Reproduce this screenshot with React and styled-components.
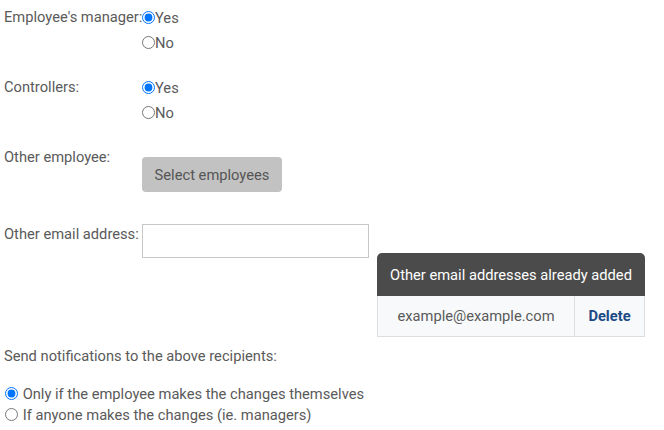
import React from 'react'
import styled, { createGlobalStyle } from 'styled-components'

const GlobalStyle = createGlobalStyle`
  body {
    margin: 0;
    background: #fff;
    font-family: Roboto, "Liberation Sans", sans-serif;
    font-size: 14.7px;
    color: #5a5a5a;
  }
`;

export default function App() {
  return (
    <Page>
      <GlobalStyle />
      <Row>
        <Label>Employee's manager:</Label>
        <Options>
          <Option><Radio name="mgr" defaultChecked />Yes</Option>
          <Option><Radio name="mgr" />No</Option>
        </Options>
      </Row>

      <Row $top={20}>
        <Label>Controllers:</Label>
        <Options>
          <Option><Radio name="ctl" defaultChecked />Yes</Option>
          <Option><Radio name="ctl" />No</Option>
        </Options>
      </Row>

      <Row $top={20}>
        <Label>Other employee:</Label>
        <SelectButton type="button">Select employees</SelectButton>
      </Row>

      <Row $top={30}>
        <Label>Other email address:</Label>
        <EmailInput type="text" />
        <AddedTable>
          <thead>
            <tr>
              <HeadCell colSpan={2}>Other email addresses already added</HeadCell>
            </tr>
          </thead>
          <tbody>
            <tr>
              <Cell $w={197}>example@example.com</Cell>
              <Cell $w={71}><DeleteLink>Delete</DeleteLink></Cell>
            </tr>
          </tbody>
        </AddedTable>
      </Row>

      <Notice>Send notifications to the above recipients:</Notice>
      <Choices>
        <Choice><Radio name="when" defaultChecked $gap /> Only if the employee makes the changes themselves</Choice>
        <Choice><Radio name="when" $gap /> If anyone makes the changes (ie. managers)</Choice>
      </Choices>
    </Page>
  )
}

const Radio = (props) => <RadioInput type="radio" {...props} />;

const Page = styled.div`
  padding: 5px 4px 0;
  width: 664px;
  height: 430px;
  box-sizing: border-box;
  overflow: hidden;
`;

const Row = styled.div`
  display: flex;
  align-items: flex-start;
  margin-top: ${p => p.$top || 0}px;
`;

const Label = styled.div`
  width: 138px;
  flex: none;
  white-space: nowrap;
  line-height: 25px;
`;

const Options = styled.div`
  display: flex;
  flex-direction: column;
`;

const Option = styled.label`
  display: flex;
  align-items: center;
  height: 25px;
`;

const RadioInput = styled.input`
  margin: 0 ${p => (p.$gap ? 1 : 0)}px 0 ${p => (p.$gap ? 1 : 0)}px;
  width: 13px;
  height: 13px;
`;

const SelectButton = styled.button`
  margin-top: 12px;
  width: 140px;
  height: 35px;
  border: none;
  border-radius: 4px;
  background: #c2c2c2;
  color: #555;
  font-family: Roboto, "Liberation Sans", sans-serif;
  font-size: 14.7px;
  padding: 0;
`;

const EmailInput = styled.input`
  margin-top: 2px;
  width: 227px;
  height: 34px;
  box-sizing: border-box;
  border: 1px solid #c8c8c8;
  padding: 0 6px;
  font-family: Roboto, "Liberation Sans", sans-serif;
  font-size: 14.7px;
`;

const AddedTable = styled.table`
  margin: 31px 0 0 8px;
  width: 268px;
  border-collapse: separate;
  border-spacing: 0;
`;

const HeadCell = styled.th`
  height: 43px;
  padding: 0;
  background: #4b4b4b;
  color: #fff;
  font-weight: 400;
  font-size: 14.7px;
  text-align: center;
  border-radius: 5px 5px 0 0;
`;

const Cell = styled.td`
  width: ${p => p.$w}px;
  height: 41px;
  padding: 0;
  box-sizing: border-box;
  background: #f7f9fb;
  text-align: center;
  border-bottom: 1px solid #ddd;
  border-left: 1px solid #ddd;
  &:last-child { border-right: 1px solid #ddd; }
`;

const DeleteLink = styled.a`
  color: #1d4a86;
  font-weight: 700;
  cursor: pointer;
`;

const Notice = styled.div`
  margin-top: 9px;
  line-height: 20px;
`;

const Choices = styled.div`
  margin-top: 17px;
  display: flex;
  flex-direction: column;
`;

const Choice = styled.label`
  display: flex;
  align-items: center;
  height: 21px;
  white-space: pre;
`;
